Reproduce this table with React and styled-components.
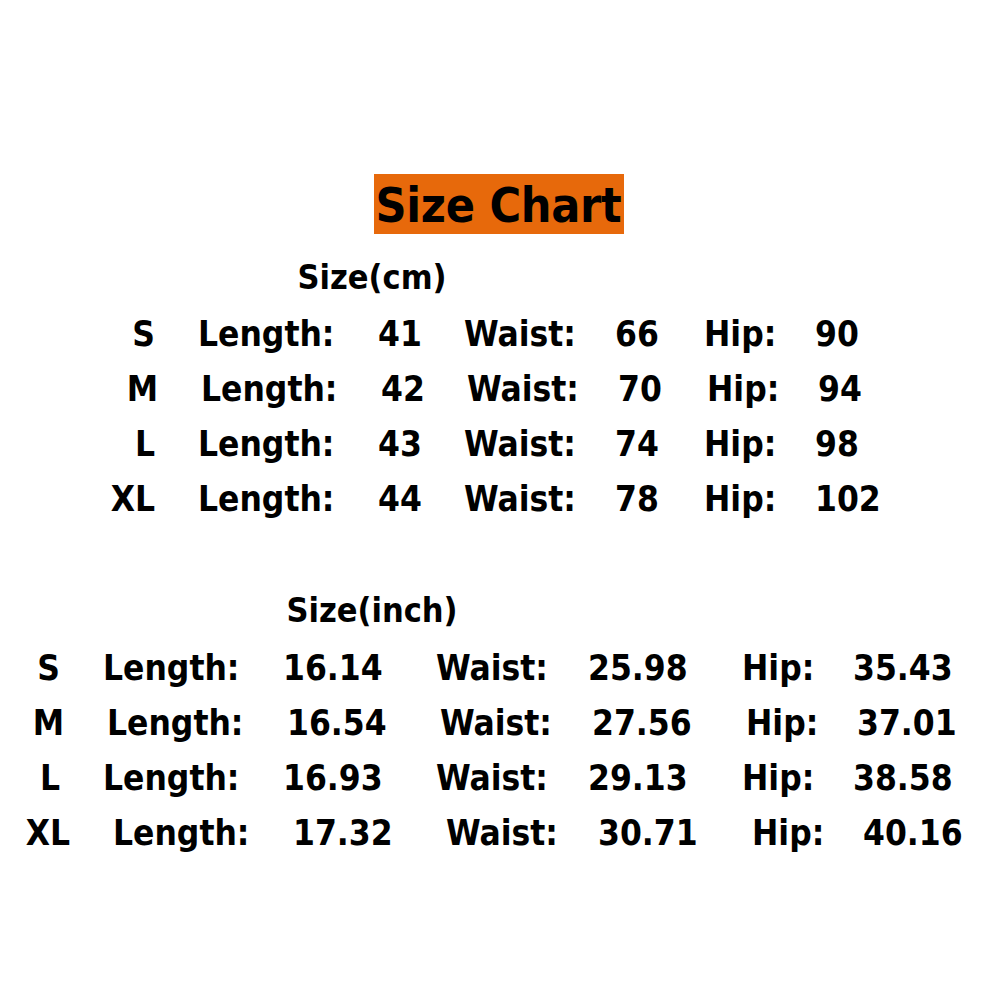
import React from "react";
import styled, { createGlobalStyle } from "styled-components";

const GlobalStyle = createGlobalStyle`
  html, body {
    margin: 0;
    padding: 0;
    background: #ffffff;
  }
  body {
    font-family: "DejaVu Sans Condensed", "DejaVu Sans", Tahoma, sans-serif;
    font-weight: bold;
    color: #000;
  }
`;

const Page = styled.div`
  width: 1000px;
  height: 1000px;
  box-sizing: border-box;
  padding-top: 174px;
  display: flex;
  flex-direction: column;
`;

const TitleWrap = styled.div`
  display: flex;
  justify-content: center;
  padding-right: 3px;
`;

const Title = styled.h1`
  margin: 0;
  width: 250px;
  height: 60px;
  box-sizing: border-box;
  padding-top: 2px;
  background: #e7690b;
  font-size: 48px;
  line-height: 58px;
  font-weight: bold;
  text-align: center;
  white-space: nowrap;
  letter-spacing: -0.3px;
`;

const Section = styled.section`
  display: flex;
  flex-direction: column;
  margin-top: ${(p) => p.$top}px;
`;

const Heading = styled.h2`
  margin: 0 0 ${(p) => p.$gap}px 0;
  width: 744px;
  text-align: center;
  font-size: 34px;
  line-height: 40px;
  font-weight: bold;
`;

const Row = styled.div`
  display: grid;
  grid-template-columns: ${(p) => p.$cols};
  height: 55px;
  line-height: 55px;
  font-size: 35px;
  white-space: nowrap;
  padding-left: ${(p) => p.$shift}px;
`;

const SizeCell = styled.span`
  text-align: right;
  padding-right: 43px;
`;

const Cell = styled.span`
  text-align: left;
`;

const cmRows = [
  { size: "S", len: "41", waist: "66", hip: "90", shift: 0 },
  { size: "M", len: "42", waist: "70", hip: "94", shift: 3 },
  { size: "L", len: "43", waist: "74", hip: "98", shift: -3 },
  { size: "XL", len: "44", waist: "78", hip: "102", shift: 0 },
];

const inchRows = [
  { size: "S", len: "16.14", waist: "25.98", hip: "35.43", shift: 0 },
  { size: "M", len: "16.54", waist: "27.56", hip: "37.01", shift: 4 },
  { size: "L", len: "16.93", waist: "29.13", hip: "38.58", shift: -3 },
  { size: "XL", len: "17.32", waist: "30.71", hip: "40.16", shift: 10 },
];

const CM_COLS = "198px 180px 86px 151px 89px 111px auto";
const INCH_COLS = "103px 180px 153px 152px 154px 111px auto";

const SizeTable = ({ rows, cols }) =>
  rows.map((r) => (
    <Row key={r.size} $cols={cols} $shift={r.shift}>
      <SizeCell>{r.size}</SizeCell>
      <Cell>Length:</Cell>
      <Cell>{r.len}</Cell>
      <Cell>Waist:</Cell>
      <Cell>{r.waist}</Cell>
      <Cell>Hip:</Cell>
      <Cell>{r.hip}</Cell>
    </Row>
  ));

export default function App() {
  return (
    <>
      <GlobalStyle />
      <Page>
        <TitleWrap>
          <Title>Size Chart</Title>
        </TitleWrap>

        <Section $top={23}>
          <Heading $gap={10}>Size(cm)</Heading>
          <SizeTable rows={cmRows} cols={CM_COLS} />
        </Section>

        <Section $top={63}>
          <Heading $gap={11}>Size(inch)</Heading>
          <SizeTable rows={inchRows} cols={INCH_COLS} />
        </Section>
      </Page>
    </>
  );
}
